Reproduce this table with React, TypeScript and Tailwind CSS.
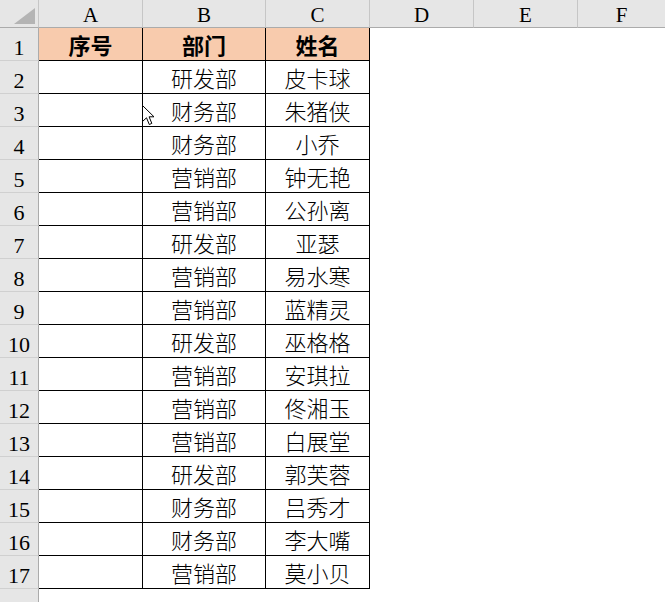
import React from "react";

const rows: [string, string][] = [
  ["研发部", "皮卡球"],
  ["财务部", "朱猪侠"],
  ["财务部", "小乔"],
  ["营销部", "钟无艳"],
  ["营销部", "公孙离"],
  ["研发部", "亚瑟"],
  ["营销部", "易水寒"],
  ["营销部", "蓝精灵"],
  ["研发部", "巫格格"],
  ["营销部", "安琪拉"],
  ["营销部", "佟湘玉"],
  ["营销部", "白展堂"],
  ["研发部", "郭芙蓉"],
  ["财务部", "吕秀才"],
  ["财务部", "李大嘴"],
  ["营销部", "莫小贝"],
];

const serif = { fontFamily: '"Liberation Serif", "Times New Roman", serif' };
const cjk = { fontFamily: '"Noto Sans CJK SC", "Noto Sans", sans-serif' };

function ColHead({ label, last }: { label: string; last?: boolean }) {
  return (
    <div
      className={`flex items-end justify-center bg-[#e6e6e6] border-b border-b-[#ababab] ${last ? "" : "border-r border-r-[#c6c6c6]"} text-[21px] leading-[21px] text-black`}
      style={serif}
    >
      <span className="pb-[1px]">{label}</span>
    </div>
  );
}

function RowHead({ n }: { n: number }) {
  return (
    <div
      className="flex items-end justify-center bg-[#e6e6e6] border-r border-r-[#ababab] border-b border-b-[#d0d0d0] text-[22px] leading-[22px] text-black"
      style={serif}
    >
      <span className="pb-[1px]">{n}</span>
    </div>
  );
}

function DataCell({ text, bold, fill }: { text?: string; bold?: boolean; fill?: boolean }) {
  return (
    <div
      className={`flex items-end justify-center border-r border-b border-black ${fill ? "bg-[#f8cbad]" : "bg-white"} text-[22px] leading-[22px] text-black ${bold ? "font-bold" : "font-light"}`}
      style={cjk}
    >
      <span className="pb-[5px]">{text}</span>
    </div>
  );
}

function Empty() {
  return <div className="bg-white" />;
}

export default function App() {
  return (
    <div className="relative w-[665px] h-[602px] overflow-hidden bg-white">
      <div className="grid grid-cols-[39px_104px_123px_104px_104px_104px_87px] grid-rows-[28px_repeat(18,33px)]">
        {/* corner */}
        <div className="relative bg-[#e6e6e6] border-r border-r-[#c6c6c6] border-b border-b-[#ababab]">
          <svg className="absolute left-0 top-0" width="38" height="27" viewBox="0 0 38 27">
            <polygon points="35,8 35,24 14,24" fill="#b4b4b4" />
          </svg>
        </div>
        <ColHead label="A" />
        <ColHead label="B" />
        <ColHead label="C" />
        <ColHead label="D" />
        <ColHead label="E" />
        <ColHead label="F" last />

        {/* row 1 */}
        <RowHead n={1} />
        <DataCell text="序号" bold fill />
        <DataCell text="部门" bold fill />
        <DataCell text="姓名" bold fill />
        <Empty />
        <Empty />
        <Empty />

        {rows.map(([dept, name], i) => (
          <React.Fragment key={i}>
            <RowHead n={i + 2} />
            <DataCell />
            <DataCell text={dept} />
            <DataCell text={name} />
            <Empty />
            <Empty />
            <Empty />
          </React.Fragment>
        ))}

        <RowHead n={18} />
        <Empty />
        <Empty />
        <Empty />
        <Empty />
        <Empty />
        <Empty />
      </div>

      {/* mouse cursor */}
      <svg className="absolute left-[142px] top-[105px]" width="14" height="21" viewBox="0 0 14 21">
        <path
          d="M0.5 0.5 L0.5 16.5 L4.5 12.8 L7.3 19.5 L9.8 18.4 L7.1 11.8 L12 11.8 Z"
          fill="white"
          stroke="black"
          strokeWidth="1"
          strokeLinejoin="miter"
        />
      </svg>
    </div>
  );
}
